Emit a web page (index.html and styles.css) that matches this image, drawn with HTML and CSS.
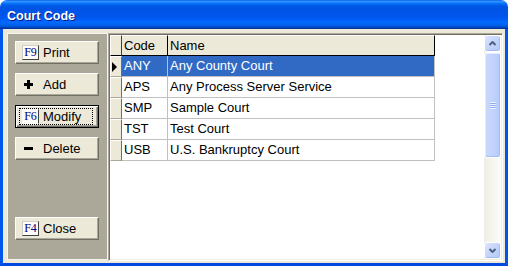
FILE: index.html
```html
<!DOCTYPE html>
<html>
<head>
<meta charset="utf-8">
<link rel="stylesheet" href="styles.css">
</head>
<body>
<div class="window">
  <div class="titlebar"><span class="title">Court Code</span></div>
  <div class="client">
    <div class="panel">
      <div class="btn"><span class="fkey">F9</span><span class="lbl">Print</span></div>
      <div class="btn"><span class="ico"><svg width="9" height="9" viewBox="0 0 9 9"><path d="M3 0h3v3h3v3H6v3H3V6H0V3h3z" fill="#000"/></svg></span><span class="lbl">Add</span></div>
      <div class="btn default"><span class="focus"><span class="fkey">F6</span><span class="lbl">Modify</span></span></div>
      <div class="btn"><span class="ico"><svg width="9" height="9" viewBox="0 0 9 9"><path d="M0 3h9v3H0z" fill="#000"/></svg></span><span class="lbl">Delete</span></div>
      <div class="btn close"><span class="fkey">F4</span><span class="lbl">Close</span></div>
    </div>
    <div class="grid-frame">
      <div class="table">
        <div class="row hdr">
          <div class="ind"></div>
          <div class="cell code">Code</div>
          <div class="cell name">Name</div>
        </div>
        <div class="row sel">
          <div class="ind"><span class="arrow"></span></div>
          <div class="cell code">ANY</div>
          <div class="cell name">Any County Court</div>
        </div>
        <div class="row">
          <div class="ind"></div>
          <div class="cell code">APS</div>
          <div class="cell name">Any Process Server Service</div>
        </div>
        <div class="row">
          <div class="ind"></div>
          <div class="cell code">SMP</div>
          <div class="cell name">Sample Court</div>
        </div>
        <div class="row">
          <div class="ind"></div>
          <div class="cell code">TST</div>
          <div class="cell name">Test Court</div>
        </div>
        <div class="row">
          <div class="ind"></div>
          <div class="cell code">USB</div>
          <div class="cell name">U.S. Bankruptcy Court</div>
        </div>
      </div>
      <div class="scrollbar">
        <div class="sb-btn"><svg width="7" height="5" viewBox="0 0 7 5"><path d="M0.5 4L3.5 1L6.5 4" fill="none" stroke="#4D6185" stroke-width="2"/></svg></div>
        <div class="sb-thumb"><span class="grip"></span></div>
        <div class="sb-track"></div>
        <div class="sb-btn"><svg width="7" height="5" viewBox="0 0 7 5"><path d="M0.5 1L3.5 4L6.5 1" fill="none" stroke="#4D6185" stroke-width="2"/></svg></div>
      </div>
    </div>
  </div>
</div>
</body>
</html>
```
FILE: styles.css
```css
html, body {
  margin: 0;
  padding: 0;
  background: #fff;
}
.window {
  width: 508px;
  height: 266px;
  display: flex;
  flex-direction: column;
  font-family: "Liberation Sans", Arial, sans-serif;
  font-size: 13px;
  color: #000;
  overflow: hidden;
}
.titlebar {
  height: 29px;
  flex: 0 0 29px;
  border-radius: 7px 7px 0 0;
  background: linear-gradient(to bottom, #0058EE 0%, #3593FF 4%, #288EFF 7%, #127DFF 10%, #036FFC 13%, #0262EE 17%, #0057E5 22%, #0054E3 28%, #0055EB 56%, #005BF5 66%, #026AFE 76%, #0062EF 86%, #0052D6 92%, #0040AB 96%, #003092 100%);
  display: flex;
  align-items: center;
  padding-left: 7px;
  box-sizing: border-box;
}
.title {
  color: #fff;
  font-weight: bold;
  font-size: 12.5px;
  text-shadow: 1px 1px 0 #0A1883;
  margin-top: 3px;
}
.client {
  flex: 1;
  display: flex;
  background: #ECE9D8;
  border-left: 3px solid #0055EA;
  border-right: 3px solid #0055EA;
  border-bottom: 3px solid #0048E0;
  padding: 4px 2px 2px 4px;
  box-sizing: border-box;
}
.panel {
  width: 101px;
  flex: 0 0 101px;
  background: #ACA899;
  border: 1px solid #F6F5EF;
  box-sizing: border-box;
  display: flex;
  flex-direction: column;
  gap: 9px;
  padding: 7px 0 0 7px;
  margin-bottom: 1px;
}
.btn {
  width: 84px;
  height: 23px;
  box-sizing: border-box;
  background: #ECE9D8;
  border-top: 1px solid #fff;
  border-left: 1px solid #fff;
  border-right: 1px solid #716F64;
  border-bottom: 1px solid #716F64;
  box-shadow: inset -1px -1px 0 #ACA899;
  display: flex;
  align-items: center;
  padding-left: 6px;
}
.btn.default {
  border: 1px solid #000;
  box-shadow: inset 1px 1px 0 #fff, inset -1px -1px 0 #716F64, inset -2px -2px 0 #ACA899;
  padding-left: 3px;
}
.btn.close {
  margin-top: 48px;
}
.focus {
  display: flex;
  align-items: center;
  border: 1px dotted #000;
  height: 17px;
  box-sizing: border-box;
  padding-left: 2px;
  width: 74px;
}
.fkey {
  width: 17px;
  height: 15px;
  box-sizing: border-box;
  background: #FBFBF8;
  border-top: 1px solid #D4D0C8;
  border-left: 1px solid #D4D0C8;
  border-right: 1px solid #404040;
  border-bottom: 1px solid #404040;
  font-family: "Liberation Serif", "Times New Roman", serif;
  font-size: 12px;
  color: #000080;
  line-height: 13px;
  text-align: center;
  margin-right: 4px;
}
.focus .fkey {
  border-top-color: #FBFBF8;
  border-left-color: #FBFBF8;
  border-bottom-color: #FBFBF8;
}
.ico {
  width: 17px;
  height: 15px;
  display: flex;
  align-items: center;
  padding-left: 2px;
  box-sizing: border-box;
  margin-right: 4px;
}
.ico svg { display: block; }
.lbl {
  line-height: 15px;
}
.grid-frame {
  flex: 1;
  display: flex;
  background: #fff;
  border-top: 1px solid #ACA899;
  border-left: 1px solid #ACA899;
  border-right: 1px solid #fff;
  border-bottom: 1px solid #fff;
  box-shadow: inset 1px 1px 0 #716F64, inset -1px -1px 0 #F1EFE2;
  padding: 1px;
  box-sizing: border-box;
}
.table {
  flex: 1;
  display: flex;
  flex-direction: column;
}
.row {
  display: flex;
  height: 21px;
  flex: 0 0 21px;
}
.row.hdr {
  height: 21px;
  flex: 0 0 21px;
}
.ind {
  width: 12px;
  flex: 0 0 12px;
  box-sizing: border-box;
  background: #ECE9D8;
  border-top: 1px solid #fff;
  border-left: 1px solid #fff;
  border-right: 1px solid #716F64;
  border-bottom: 1px solid #ACA899;
  display: flex;
  align-items: center;
  padding-left: 1px;
}
.hdr .ind {
  border-right-color: #404040;
  border-bottom-color: #000;
}
.arrow {
  width: 0;
  height: 0;
  border-top: 5px solid transparent;
  border-bottom: 5px solid transparent;
  border-left: 5px solid #000;
}
.cell {
  box-sizing: border-box;
  border-right: 1px solid #C0C0C0;
  border-bottom: 1px solid #C0C0C0;
  padding-left: 2px;
  line-height: 20px;
  white-space: nowrap;
  overflow: hidden;
}
.code { width: 46px; flex: 0 0 46px; }
.name { width: 267px; flex: 0 0 267px; }
.hdr .cell {
  background: #ECE9D8;
  border-top: 1px solid #fff;
  border-right: 1px solid #000;
  border-bottom: 1px solid #000;
  line-height: 19px;
}
.sel .cell {
  background: #316AC5;
  color: #fff;
  border-right-color: #C0C0C0;
}
.scrollbar {
  width: 17px;
  flex: 0 0 17px;
  display: flex;
  flex-direction: column;
  background: linear-gradient(to right, #EEEDE5, #FDFDFA);
}
.sb-btn {
  width: 17px;
  height: 17px;
  flex: 0 0 17px;
  box-sizing: border-box;
  border: 1px solid #FFFFFF;
  border-radius: 3px;
  background: linear-gradient(135deg, #DCE6FD 0%, #C4D4FB 50%, #B4C8F6 100%);
  box-shadow: inset -1px -1px 0 #A6BDF2;
  display: flex;
  align-items: center;
  justify-content: center;
}
.sb-thumb {
  width: 17px;
  height: 106px;
  flex: 0 0 106px;
  box-sizing: border-box;
  border: 1px solid #FFFFFF;
  border-radius: 3px;
  background: linear-gradient(to right, #C9D8FC 0%, #C2D3FC 50%, #B6CAF8 100%);
  box-shadow: inset -1px -1px 0 #A6BDF2, inset 1px 1px 0 #E4ECFE;
  display: flex;
  align-items: center;
  justify-content: center;
}
.grip {
  width: 6px;
  height: 7px;
  background: repeating-linear-gradient(to bottom, #EEF4FE 0px, #EEF4FE 1px, #8CB0F8 1px, #8CB0F8 2px);
}
.sb-track {
  flex: 1;
}
```
